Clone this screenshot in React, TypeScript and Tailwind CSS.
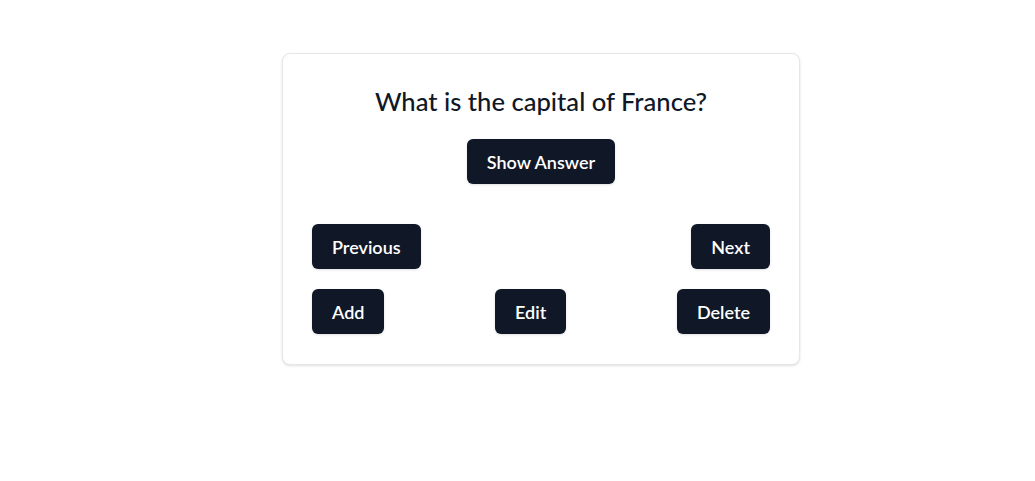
import { useState } from 'react';

interface Card {
  question: string;
  answer: string;
}

const cards: Card[] = [
  { question: 'What is the capital of France?', answer: 'Paris' },
  { question: 'What is 2 + 2?', answer: '4' }
];

const btn =
  'h-[45px] px-5 bg-gray-900 text-white text-lg font-semibold rounded-md shadow-sm hover:bg-gray-800 transition-colors whitespace-nowrap';

export default function App() {
  const [index, setIndex] = useState(0);
  const [showAnswer, setShowAnswer] = useState(false);
  const card = cards[index];

  const go = (step: number) => {
    setIndex(prev => (prev + step + cards.length) % cards.length);
    setShowAnswer(false);
  };

  return (
    <div className="min-h-screen bg-white pt-[53px] pl-[282px] font-['Lato',sans-serif] text-gray-900">
      <div className="w-[518px] bg-white border border-gray-200 rounded-lg shadow-sm px-[29px] pt-[31px] pb-[30px]">
        <h1 className="text-[25.6px] font-medium text-center leading-8">{card.question}</h1>
        {showAnswer && <p className="text-xl text-center mt-3">{card.answer}</p>}

        <div className="flex justify-center mt-[22px]">
          <button className={btn} onClick={() => setShowAnswer(s => !s)}>
            {showAnswer ? 'Hide Answer' : 'Show Answer'}
          </button>
        </div>

        <div className="flex justify-between mt-10">
          <button className={btn} onClick={() => go(-1)}>
            Previous
          </button>
          <button className={btn} onClick={() => go(1)}>
            Next
          </button>
        </div>

        <div className="flex justify-between mt-5">
          <button className={btn}>Add</button>
          <button className={btn}>Edit</button>
          <button className={btn}>Delete</button>
        </div>
      </div>
    </div>
  );
}
